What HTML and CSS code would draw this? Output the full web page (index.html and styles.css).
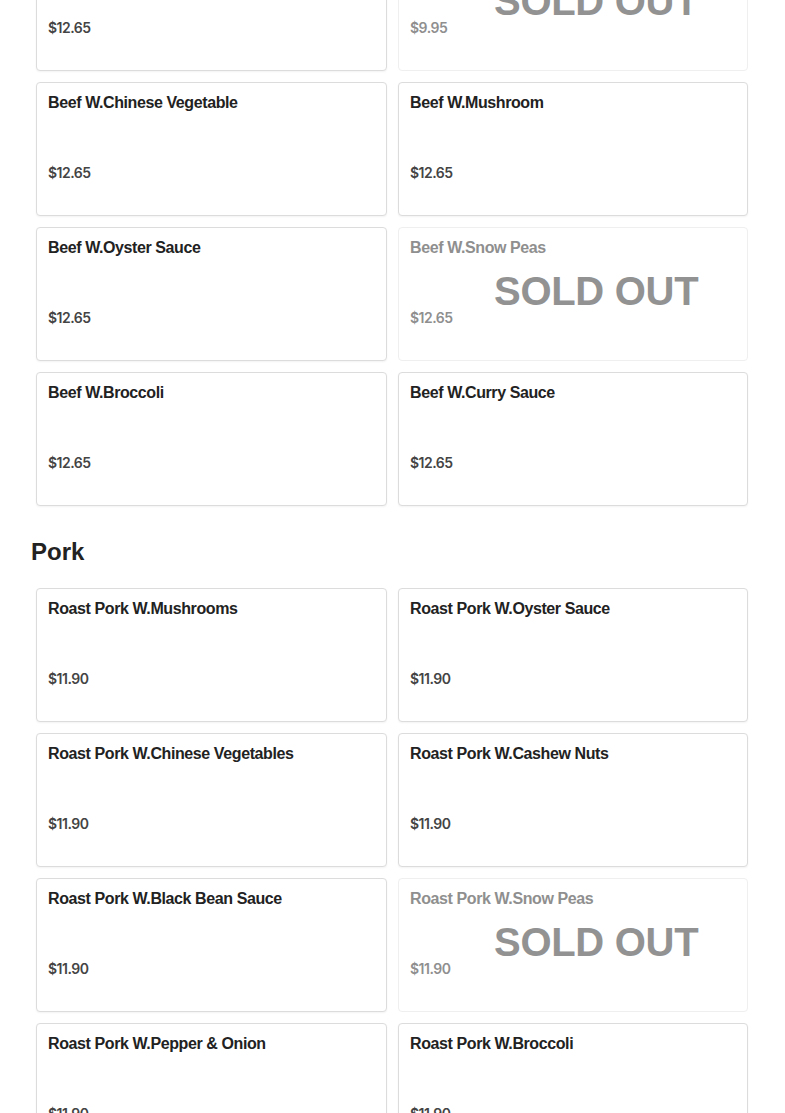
FILE: index.html
```html
<!DOCTYPE html>
<html>
<head>
<meta charset="utf-8">
<link rel="stylesheet" href="styles.css">
</head>
<body>
<div class="page">
  <div class="grid first">
    <div class="card"><div class="name"></div><div class="price">$12.65</div></div>
    <div class="card sold"><div class="name"></div><div class="price">$9.95</div><div class="soldout">SOLD OUT</div></div>
    <div class="card"><div class="name">Beef W.Chinese Vegetable</div><div class="price">$12.65</div></div>
    <div class="card"><div class="name">Beef W.Mushroom</div><div class="price">$12.65</div></div>
    <div class="card"><div class="name">Beef W.Oyster Sauce</div><div class="price">$12.65</div></div>
    <div class="card sold"><div class="name">Beef W.Snow Peas</div><div class="price">$12.65</div><div class="soldout">SOLD OUT</div></div>
    <div class="card"><div class="name">Beef W.Broccoli</div><div class="price">$12.65</div></div>
    <div class="card"><div class="name">Beef W.Curry Sauce</div><div class="price">$12.65</div></div>
  </div>
  <h2 class="section">Pork</h2>
  <div class="grid">
    <div class="card"><div class="name">Roast Pork W.Mushrooms</div><div class="price">$11.90</div></div>
    <div class="card"><div class="name">Roast Pork W.Oyster Sauce</div><div class="price">$11.90</div></div>
    <div class="card"><div class="name">Roast Pork W.Chinese Vegetables</div><div class="price">$11.90</div></div>
    <div class="card"><div class="name">Roast Pork W.Cashew Nuts</div><div class="price">$11.90</div></div>
    <div class="card"><div class="name">Roast Pork W.Black Bean Sauce</div><div class="price">$11.90</div></div>
    <div class="card sold"><div class="name">Roast Pork W.Snow Peas</div><div class="price">$11.90</div><div class="soldout">SOLD OUT</div></div>
    <div class="card"><div class="name">Roast Pork W.Pepper &amp; Onion</div><div class="price">$11.90</div></div>
    <div class="card"><div class="name">Roast Pork W.Broccoli</div><div class="price">$11.90</div></div>
  </div>
</div>
</body>
</html>
```
FILE: styles.css
```css
html, body {
  margin: 0;
  padding: 0;
  background: #fff;
  overflow: hidden;
}
body {
  font-family: "Liberation Sans", Arial, sans-serif;
  color: #222;
}
.page {
  padding: 0 36px 0 31px;
}
.grid {
  display: grid;
  grid-template-columns: 351px 350px;
  column-gap: 11px;
  row-gap: 11px;
  margin-left: 5px;
}
.grid.first {
  margin-top: -63px;
}
.card {
  position: relative;
  box-sizing: border-box;
  height: 134px;
  border: 1px solid #dcdcdc;
  border-radius: 4px;
  padding: 10px 11px 0 11px;
  background: #fff;
  box-shadow: 0 1px 2px rgba(0,0,0,0.05);
}
.name {
  font-size: 16px;
  font-weight: bold;
  line-height: 20px;
  height: 20px;
  color: #222;
  letter-spacing: -0.4px;
}
.price {
  margin-top: 50px;
  font-family: Inter, "Liberation Sans", sans-serif;
  font-size: 14px;
  font-weight: 600;
  line-height: 20px;
  color: #444;
  letter-spacing: -0.5px;
}
.card.sold {
  border-color: #efefef;
  box-shadow: none;
}
.card.sold .name,
.card.sold .price {
  color: #8f8f8f;
}
.soldout {
  position: absolute;
  left: 95px;
  top: 41px;
  font-size: 40px;
  font-weight: bold;
  line-height: 44px;
  color: #929292;
  white-space: nowrap;
  letter-spacing: -0.3px;
}
.section {
  margin: 32px 0 22px 0;
  font-size: 24px;
  font-weight: bold;
  line-height: 28px;
  color: #222;
}
```
